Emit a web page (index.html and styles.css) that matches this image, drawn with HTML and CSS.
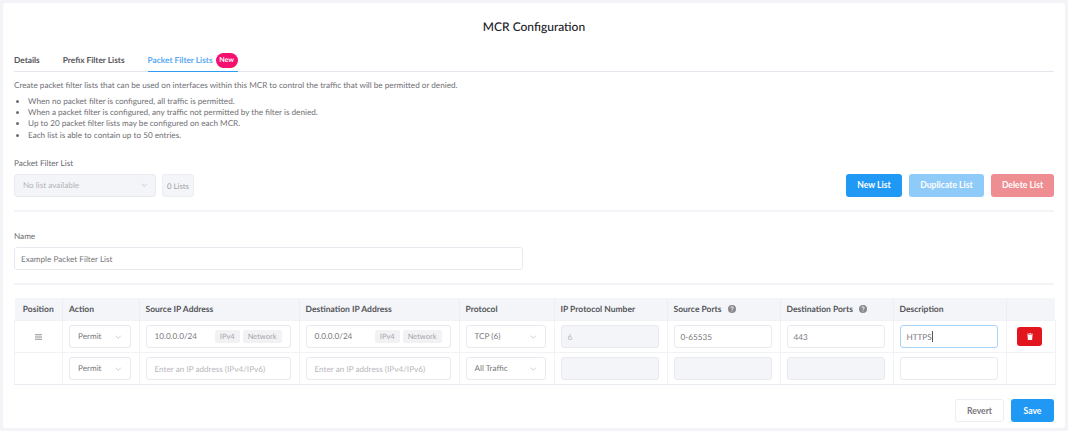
FILE: index.html
```html
<!DOCTYPE html>
<html lang="en">
<head>
<meta charset="utf-8">
<title>MCR Configuration</title>
<link rel="stylesheet" href="styles.css">
</head>
<body>
<main class="card">
  <h1 class="title">MCR Configuration</h1>
  <nav class="tabs">
    <a class="tab">Details</a>
    <a class="tab">Prefix Filter Lists</a>
    <a class="tab active">Packet Filter Lists<span class="badge">New</span></a>
  </nav>
  <p class="intro">Create packet filter lists that can be used on interfaces within this MCR to control the traffic that will be permitted or denied.</p>
  <ul class="notes">
    <li>When no packet filter is configured, all traffic is permitted.</li>
    <li>When a packet filter is configured, any traffic not permitted by the filter is denied.</li>
    <li>Up to 20 packet filter lists may be configured on each MCR.</li>
    <li>Each list is able to contain up to 50 entries.</li>
  </ul>
  <label class="label list-label">Packet Filter List</label>
  <section class="list-row">
    <div class="field select disabled list-select"><span>No list available</span>
      <svg class="chev" viewBox="0 0 10 6"><path d="M1 1l4 4 4-4"/></svg></div>
    <div class="count">0 Lists</div>
    <div class="actions">
      <button class="btn primary new">New List</button>
      <button class="btn primary faded dup">Duplicate List</button>
      <button class="btn danger faded del">Delete List</button>
    </div>
  </section>
  <hr class="rule rule-a">
  <label class="label name-label">Name</label>
  <div class="field name-input">Example Packet Filter List</div>
  <hr class="rule rule-b">
  <table class="grid">
    <colgroup>
      <col class="c-pos"><col class="c-act"><col class="c-ip"><col class="c-ip"><col class="c-proto">
      <col class="c-port"><col class="c-port"><col class="c-port"><col class="c-port"><col class="c-del">
    </colgroup>
    <thead>
      <tr>
        <th class="center">Position</th>
        <th>Action</th>
        <th>Source IP Address</th>
        <th>Destination IP Address</th>
        <th>Protocol</th>
        <th>IP Protocol Number</th>
        <th>Source Ports<svg class="help" viewBox="0 0 16 16"><circle cx="8" cy="8" r="8"/><path d="M5.600 6.200c0-3.200 4.800-3.200 4.800-.2 0 1.800-2.400 1.800-2.400 3.600"/><circle class="dot" cx="8" cy="12" r="1"/></svg></th>
        <th>Destination Ports<svg class="help" viewBox="0 0 16 16"><circle cx="8" cy="8" r="8"/><path d="M5.600 6.200c0-3.200 4.800-3.200 4.800-.2 0 1.800-2.400 1.800-2.400 3.600"/><circle class="dot" cx="8" cy="12" r="1"/></svg></th>
        <th>Description</th>
        <th></th>
      </tr>
    </thead>
    <tbody>
      <tr>
        <td class="center"><svg class="drag" viewBox="0 0 14 11"><path d="M0 1h14M0 5.500h14M0 10h14"/></svg></td>
        <td><div class="field select"><span>Permit</span><svg class="chev" viewBox="0 0 10 6"><path d="M1 1l4 4 4-4"/></svg></div></td>
        <td><div class="field ip"><span class="grow">10.0.0.0/24</span><span class="tag">IPv4</span><span class="tag">Network</span></div></td>
        <td><div class="field ip"><span class="grow">0.0.0.0/24</span><span class="tag">IPv4</span><span class="tag">Network</span></div></td>
        <td><div class="field select"><span>TCP (6)</span><svg class="chev" viewBox="0 0 10 6"><path d="M1 1l4 4 4-4"/></svg></div></td>
        <td><div class="field disabled">6</div></td>
        <td><div class="field">0-65535</div></td>
        <td><div class="field">443</div></td>
        <td><div class="field focus">HTTPS<span class="caret"></span></div></td>
        <td class="center trash-cell"><button class="trash"><svg viewBox="0 0 12 14"><path d="M4.300 0h3.400l.6 1H12v1.600H0V1h3.700zM1 3.600h10l-.7 9.200c0 .7-.5 1.200-1.200 1.200H2.900c-.7 0-1.200-.5-1.200-1.200z"/></svg></button></td>
      </tr>
      <tr>
        <td></td>
        <td><div class="field select"><span>Permit</span><svg class="chev" viewBox="0 0 10 6"><path d="M1 1l4 4 4-4"/></svg></div></td>
        <td><div class="field placeholder">Enter an IP address (IPv4/IPv6)</div></td>
        <td><div class="field placeholder">Enter an IP address (IPv4/IPv6)</div></td>
        <td><div class="field select"><span>All Traffic</span><svg class="chev" viewBox="0 0 10 6"><path d="M1 1l4 4 4-4"/></svg></div></td>
        <td><div class="field disabled"></div></td>
        <td><div class="field disabled"></div></td>
        <td><div class="field disabled"></div></td>
        <td><div class="field"></div></td>
        <td></td>
      </tr>
    </tbody>
  </table>
  <footer class="footer">
    <button class="btn plain">Revert</button>
    <button class="btn primary save">Save</button>
  </footer>
</main>
</body>
</html>
```

FILE: styles.css
```css
* { box-sizing: border-box; }
html, body { margin: 0; height: 431px; overflow: hidden; }
body {
  background: #f3f4f8;
  font-family: "Lato", "Open Sans", sans-serif;
  font-size: 8.170px;
  color: #6f6f74;
  padding: 3px;
  text-rendering: geometricPrecision;
}
.card {
  background: #fff;
  width: 1062px;
  height: 425px;
  padding: 0 11px;
  border-radius: 3px;
  overflow: hidden;
}
.title {
  margin: 0;
  padding-top: 15px;
  height: 41px;
  font-size: 12px;
  line-height: 17px;
  font-weight: 500;
  color: #202024;
  text-align: center;
}
.tabs {
  display: flex;
  height: 25px;
  margin-top: 3px;
  gap: 23px;
  border-bottom: 1px solid #e4e6ee;
}
.tab {
  font-size: 8.300px;
  font-weight: 700;
  color: #55555a;
  line-height: 23px;
  display: flex;
  align-items: center;
  height: 25px;
  padding-top: 2px;
}
.tab.active {
  color: #5aa9f2;
  border-bottom: 1px solid #2f9bf4;
}
.badge {
  background: #f5106f;
  color: #fff;
  font-size: 7px;
  font-weight: 700;
  border-radius: 8px;
  height: 15px;
  line-height: 15px;
  width: 22px;
  text-align: center;
  margin-left: 3px;
}
.intro { margin: 7px 0 0; line-height: 12px; height: 12px; }
.notes {
  margin: 5px 0 0;
  padding: 0 0 0 14px;
  line-height: 11.200px;
}
.label { display: block; line-height: 12px; color: #6a6a6f; }
.list-label { margin-top: 16px; }
.list-row { display: flex; margin-top: 5px; gap: 6px; align-items: center; }
.field {
  height: 23px;
  line-height: 23px;
  border: 1px solid #e8eaf0;
  border-radius: 3px;
  background: #fff;
  padding: 0 6px;
  color: #77777c;
  white-space: nowrap;
  overflow: hidden;
}
.field.disabled { background: #f4f5f8; color: #b4b4b9; }
.field.placeholder { color: #b7b7bc; padding: 0 8px; }
.field.focus { border-color: #a9d3fa; }
.select { display: flex; align-items: center; justify-content: space-between; padding: 0 8px; }
.chev { width: 6.500px; height: 4px; flex: none; fill: none; stroke: #b5b5ba; stroke-width: 1; }
.list-select { width: 142px; background: #f4f5f8; color: #b4b4b9; }
.count {
  width: 32px;
  height: 23px;
  line-height: 23px;
  text-align: center;
  font-size: 7.800px;
  color: #a0a0a5;
  background: #f4f5f8;
  border: 1px solid #eceef3;
  border-radius: 3px;
}
.actions { margin-left: auto; display: flex; gap: 7px; }
.btn {
  height: 23px;
  padding: 0;
  border: 0;
  border-radius: 3px;
  font: 700 8.600px "Lato", "Open Sans", sans-serif;
  color: #fff;
}
.primary { background: #2099f5; }
.danger { background: #e01f27; }
.faded { opacity: .5; }
.new { width: 56px; }
.dup { width: 75px; }
.del { width: 63px; }
.rule { border: 0; height: 2px; background: #f3f4f8; margin: 0; }
.rule-a { margin-top: 13px; }
.name-label { margin-top: 18px; }
.name-input { width: 509px; margin-top: 5px; }
.rule-b { margin-top: 13px; }
.grid {
  margin-top: 13px;
  width: 1040px;
  border-collapse: collapse;
  table-layout: fixed;
}
.c-pos { width: 48px; }
.c-act { width: 76.500px; }
.c-ip { width: 160px; }
.c-proto { width: 95px; }
.c-port { width: 113px; }
.c-del { width: 49px; }
th {
  background: #f4f5f9;
  height: 23px;
  padding: 0 8px 0 6px;
  text-align: left;
  font-weight: 700;
  font-size: 8.500px;
  color: #55555a;
  border-left: 1px solid #eceef3;
  white-space: nowrap;
}
th:first-child { border-left: 0; }
td {
  height: 31.500px;
  padding: 0 8px 0 6px;
  border: 1px solid #f1f2f6;
  vertical-align: middle;
}
tbody tr:last-child td { height: 32.500px; border-bottom-color: #e9ebf1; }
.center { text-align: center; padding: 0; }
.trash-cell { padding-right: 2px; }
.ip { display: flex; align-items: center; gap: 3px; padding: 0 8px; }
.grow { flex: 1; }
.tag {
  font-size: 7.500px;
  line-height: 13px;
  height: 13px;
  padding: 0 5px;
  color: #a5a5aa;
  background: #f2f2f4;
  border-radius: 2px;
}
.help { width: 8px; height: 8px; margin-left: 6px; vertical-align: -1px; fill: #8a8a8e; }
.help path { fill: none; stroke: #fff; stroke-width: 1.800; }
.help .dot { fill: #fff; }
.drag { width: 7px; height: 6px; fill: none; stroke: #6a6a6e; stroke-width: 1.500; display: block; margin: 0 auto; }
.caret {
  display: inline-block;
  width: 1px;
  height: 11px;
  background: #55555a;
  vertical-align: -2px;
}
.trash {
  width: 25px;
  height: 19px;
  padding: 0;
  border: 0;
  border-radius: 3px;
  background: #e2161f;
  display: inline-flex;
  align-items: center;
  justify-content: center;
  vertical-align: middle;
}
.trash svg { width: 6px; height: 7.500px; fill: #fff; }
.footer { display: flex; justify-content: flex-end; gap: 7px; margin-top: 14px; }
.plain { width: 49px; background: #fff; color: #77777c; border: 1px solid #eceef3; }
.save { width: 43px; }
```
